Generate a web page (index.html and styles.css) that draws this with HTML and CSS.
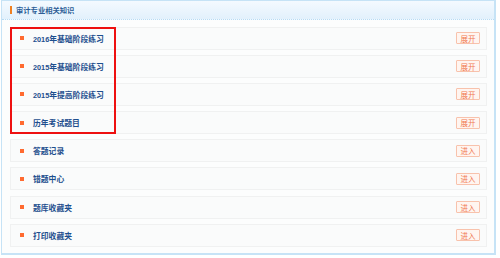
FILE: index.html
```html
<!DOCTYPE html>
<html lang="zh">
<head>
<meta charset="utf-8">
<link rel="stylesheet" href="styles.css">
</head>
<body>
<div class="panel">
  <div class="head"><span class="mark"></span><span class="title">审计专业相关知识</span></div>
  <div class="list">
    <div class="row"><span class="dot"></span><span class="name"><span class="num">2016</span>年基础阶段练习</span><span class="btn">展开</span></div>
    <div class="row"><span class="dot"></span><span class="name"><span class="num">2015</span>年基础阶段练习</span><span class="btn">展开</span></div>
    <div class="row"><span class="dot"></span><span class="name"><span class="num">2015</span>年提高阶段练习</span><span class="btn">展开</span></div>
    <div class="row"><span class="dot"></span><span class="name">历年考试题目</span><span class="btn">展开</span></div>
    <div class="row"><span class="dot"></span><span class="name">答题记录</span><span class="btn">进入</span></div>
    <div class="row"><span class="dot"></span><span class="name">错题中心</span><span class="btn">进入</span></div>
    <div class="row"><span class="dot"></span><span class="name">题库收藏夹</span><span class="btn">进入</span></div>
    <div class="row"><span class="dot"></span><span class="name">打印收藏夹</span><span class="btn">进入</span></div>
    <div class="highlight"></div>
  </div>
</div>
</body>
</html>
```
FILE: styles.css
```css
html, body { margin: 0; padding: 0; background: #fff; }
body { font-family: "Noto Sans CJK SC", "DejaVu Sans", sans-serif; }
.panel {
  width: 495px;
  height: 255px;
  border: 1px solid #c6e3f6;
  border-right-width: 2px;
  border-bottom-width: 2px;
  background: #fcfdfd;
  box-sizing: border-box;
  margin-left: 1px;
}
.head {
  height: 18px;
  background: linear-gradient(#f4faff, #e2f1fc);
  border-bottom: 1px dotted #b8dcf4;
  display: flex;
  align-items: center;
  padding-left: 8px;
}
.mark { width: 2px; height: 8px; background: #f08020; margin-right: 4px; }
.title { font-size: 7.3px; color: #2c5d96; font-weight: bold; }
.list {
  position: relative;
  display: flex;
  flex-direction: column;
  gap: 5.2px;
  padding: 6.5px 7px 0 8px;
}
.row {
  height: 23px;
  box-sizing: border-box;
  border: 1px solid #f0f1f1;
  background: #fafbfb;
  display: flex;
  align-items: center;
  padding-left: 9px;
  padding-right: 6px;
}
.dot { width: 4px; height: 4px; background: #ff6a30; margin-right: 9px; }
.name { font-size: 7.8px; color: #1e4f8e; font-weight: bold; flex: 1; }
.num { font-family: "Liberation Sans", sans-serif; font-size: 7.3px; }
.btn {
  width: 24px;
  height: 12px;
  box-sizing: border-box;
  border: 1px solid #f8c2ac;
  border-radius: 1px;
  background: #fff5f0;
  color: #f07a50;
  font-size: 7.5px;
  display: flex;
  align-items: center;
  justify-content: center;
}
.highlight {
  position: absolute;
  left: 8px;
  top: 6.5px;
  width: 106px;
  height: 107px;
  border: 2px solid #ee1010;
  box-sizing: border-box;
  pointer-events: none;
}
```
